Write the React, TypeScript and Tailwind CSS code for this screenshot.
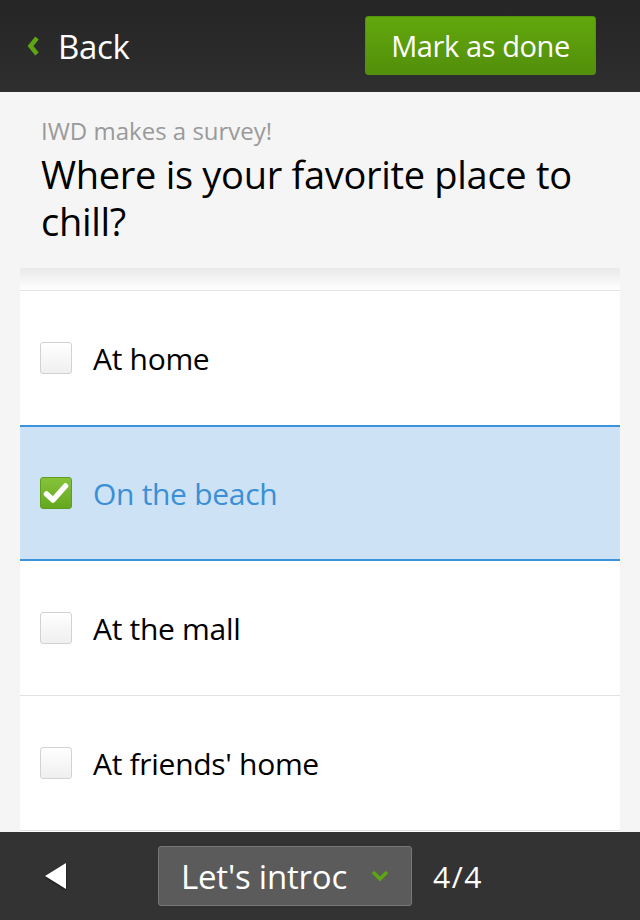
import { useState } from "react"

// Survey question screen: top nav, question header, answer list, pager bar

const answers = ["At home", "On the beach", "At the mall", "At friends' home"]

function Checkbox({ checked }: { checked: boolean }) {
  if (checked) {
    return (
      <span className="flex h-[32px] w-[32px] shrink-0 items-center justify-center rounded-[3px] border border-[#5f9e1c] bg-gradient-to-b from-[#86c33a] to-[#64a81f]">
        <svg width="26" height="22" viewBox="0 0 26 22">
          <path
            d="M3.5 12 L10 18 L22.5 4"
            fill="none"
            stroke="#fff"
            strokeWidth="5.5"
            strokeLinecap="round"
            strokeLinejoin="round"
          />
        </svg>
      </span>
    )
  }
  return (
    <span className="h-[32px] w-[32px] shrink-0 rounded-[3px] border border-[#d2d2d2] bg-gradient-to-b from-white to-[#efefef] shadow-[inset_0_1px_1px_rgba(255,255,255,0.9)]" />
  )
}

export default function App() {
  const [selected, setSelected] = useState(1)

  return (
    <div className="flex h-[920px] w-[640px] flex-col overflow-hidden bg-[#f5f5f5] font-['Open_Sans',sans-serif]">
      {/* top bar */}
      <div className="flex h-[92px] shrink-0 items-center justify-between bg-gradient-to-b from-[#252525] to-[#2f2f2f] pl-[27px] pr-[44px]">
        <button className="flex items-center gap-[18px] text-white">
          <svg width="13" height="22" viewBox="0 0 13 22">
            <path d="M10 3 L3.5 11 L10 19" fill="none" stroke="#5da513" strokeWidth="4.5" />
          </svg>
          <span className="text-[33px] leading-none tracking-[-0.3px]">Back</span>
        </button>
        <button className="mt-[-1px] flex h-[59px] w-[231px] items-center justify-center rounded-[3px] border border-[#54920e] bg-gradient-to-b from-[#62a70c] to-[#528f0b] text-[29px] tracking-[-0.4px] text-white">
          Mark as done
        </button>
      </div>

      {/* question header */}
      <div className="h-[176px] shrink-0 px-[41px] pt-[24px]">
        <div className="text-[24px] leading-[30px] text-[#9a9a9a]">IWD makes a survey!</div>
        <h1 className="mt-[5px] text-[38px] leading-[47px] tracking-[-0.3px] text-black">
          Where is your favorite place to chill?
        </h1>
      </div>

      {/* answers */}
      <div className="mx-[20px] flex-1 overflow-hidden bg-white">
        <div className="h-[23px] border-b border-[#e3e3e3] bg-gradient-to-b from-[#e9e9e9] to-white" />
        {answers.map((a, i) => {
          const on = i === selected
          return (
            <div
              key={a}
              onClick={() => setSelected(i)}
              className={
                on
                  ? "mt-[-1px] flex h-[136px] cursor-pointer items-center gap-[21px] border-y-2 border-[#3b93dc] bg-[#cde2f5] pl-[20px]"
                  : "flex h-[135px] cursor-pointer items-center gap-[21px] border-b border-[#e3e3e3] pl-[20px]"
              }
            >
              <Checkbox checked={on} />
              <span
                className={
                  on
                    ? "text-[30px] tracking-[-0.3px] text-[#3b8fd6]"
                    : "text-[30px] tracking-[-0.3px] text-black"
                }
              >
                {a}
              </span>
            </div>
          )
        })}
      </div>

      {/* pager */}
      <div className="flex h-[88px] shrink-0 items-center bg-[#333333] pl-[44px]">
        <svg width="22" height="28" viewBox="0 0 22 28" className="drop-shadow-[0_1px_1px_rgba(0,0,0,0.6)]">
          <path d="M22 1 L1 14 L22 27 Z" fill="#fff" />
        </svg>
        <div className="ml-[92px] flex h-[60px] w-[254px] items-center rounded-[3px] border border-[#777] bg-[#5b5b5b] pl-[22px] pr-[22px]">
          <span className="whitespace-nowrap text-[33px] leading-none tracking-[-0.2px] text-white">Let's introc</span>
          <svg width="18" height="12" viewBox="0 0 18 12" className="ml-auto">
            <path d="M2 2 L9 9 L16 2" fill="none" stroke="#5da513" strokeWidth="3.5" />
          </svg>
        </div>
        <span className="ml-[21px] text-[30px] tracking-[1.5px] text-white">4/4</span>
      </div>
    </div>
  )
}
